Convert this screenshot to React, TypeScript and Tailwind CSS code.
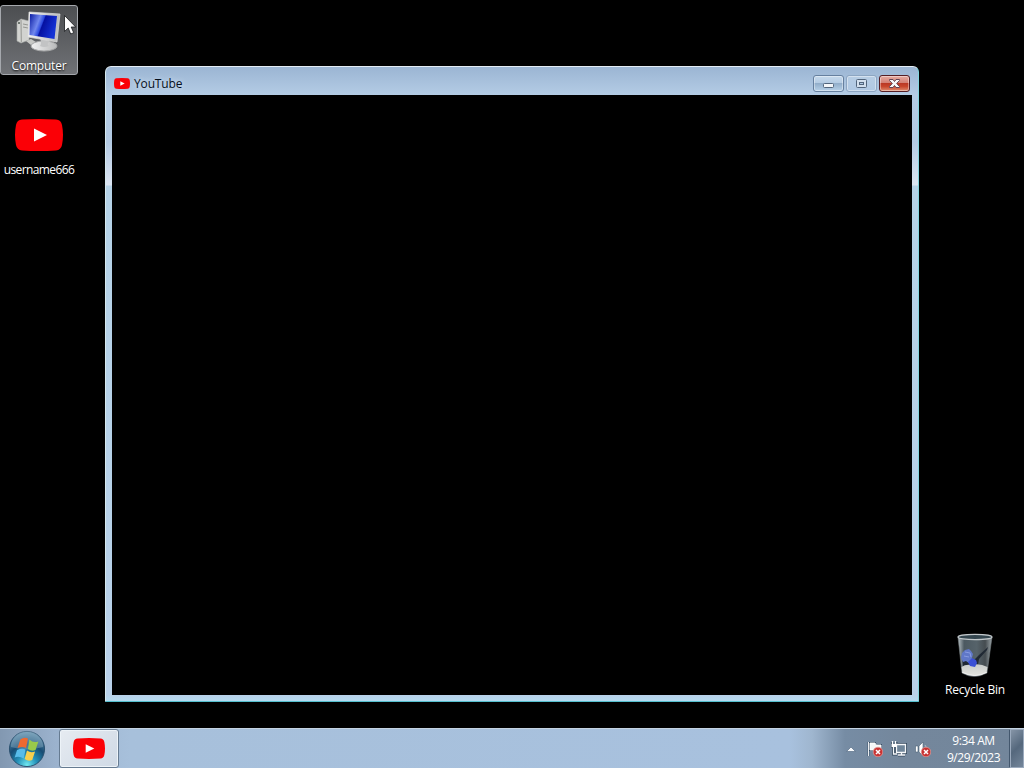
import { ReactNode } from "react";
import { clsx } from "clsx";

export default function App() {
  return (
    <div className="flex h-screen w-screen flex-col overflow-hidden bg-black font-['Open_Sans','Noto_Sans',sans-serif] text-[12px] select-none">
      <main className="relative flex-1">
        <DesktopIcon label="Computer" className="left-0 top-[5px] tracking-[-0.2px]" selected>
          <ComputerIcon />
        </DesktopIcon>
        <DesktopIcon label="username666" className="left-0 top-[109px] tracking-[-0.6px]">
          <YouTubeIcon className="mt-[9px] h-8 w-12" />
        </DesktopIcon>
        <DesktopIcon label="Recycle Bin" className="left-[936px] top-[629px] tracking-[-0.25px]">
          <RecycleBinIcon />
        </DesktopIcon>
        <Window />
        <Cursor />
      </main>
      <Taskbar />
    </div>
  );
}

function DesktopIcon({ label, className, selected, children }: {
  label: string;
  className: string;
  selected?: boolean;
  children: ReactNode;
}) {
  return (
    <div
      className={clsx(
        "absolute flex h-[70px] w-[78px] flex-col items-center justify-between rounded-[3px] border",
        selected
          ? "border-[#a5a8ad] bg-linear-to-b from-[#4c4e51] to-[#707276]"
          : "border-transparent",
        className
      )}
    >
      {children}
      <span className="whitespace-nowrap text-[12px] leading-[17px] text-white [text-shadow:0_1px_2px_#000]">
        {label}
      </span>
    </div>
  );
}

function Window() {
  return (
    <section className="absolute left-[105px] top-[66px] flex h-[636px] w-[814px] flex-col rounded-t-[6px] rounded-b-[1px] border border-t-[#e4edf5] border-l-[#d5e8ee] border-r-[#83d5df] border-b-[#55bfce] bg-[linear-gradient(to_bottom,#9bb5d3_0px,#b4cce5_28px,#b3cae3_75px,#dce5f2_118px,#b5d2e7_119px,#b9d1ea_628px,#b5daf0_100%)] px-[6px] pb-[6px]">
      <header className="flex h-7 shrink-0 items-center pl-[2px] pt-[5px]">
        <YouTubeIcon className="h-[11px] w-4" />
        <h1 className="ml-1 text-[12px] leading-4 tracking-[-0.15px] text-[#06101c] [text-shadow:0_0_5px_#dce9f5]">YouTube</h1>
        <div className="ml-auto mr-[2px] flex gap-[2px]">
          <CaptionButton className="border-[#66809f] bg-[linear-gradient(#c5d9ec_0%,#b4cbe3_48%,#92aeca_50%,#b7d1e9_100%)]">
            <rect x="9.5" y="7.5" width="10" height="4" rx="1" fill="#f4f7fa" stroke="#53667d" />
          </CaptionButton>
          <CaptionButton className="border-[#8da6c2] bg-linear-to-b from-[#b7cde4] to-[#b0c9e4]">
            <rect x="9.5" y="3.5" width="10" height="8" rx="1" fill="#d2dfed" stroke="#52657c" />
            <rect x="12.5" y="6.5" width="4" height="2" fill="#afc7e1" stroke="#52657c" />
          </CaptionButton>
          <CaptionButton className="border-[#541d24] bg-[linear-gradient(#e6aaa1_0%,#d38074_47%,#bb3925_50%,#c8472d_70%,#df8d70_100%)]">
            <path d="M9.500 3.500h3.500l1.500 2L16 3.500h3.500v1l-2.800 3 2.800 3v1H16l-1.500-2-1.500 2H9.500v-1l2.800-3-2.800-3z" fill="#f7f7f8" stroke="#624454" />
          </CaptionButton>
        </div>
      </header>
      <div className="flex-1 bg-black" />
    </section>
  );
}

function CaptionButton({ className, children }: { className: string; children: ReactNode }) {
  return (
    <button className={clsx("h-[17px] w-[31px] rounded-[3px] border shadow-[inset_0_0_0_1px_#ffffff66]", className)}>
      <svg viewBox="0 0 29 15" className="block h-[15px] w-[29px]">{children}</svg>
    </button>
  );
}

function Taskbar() {
  return (
    <footer className="flex h-10 shrink-0 border-t border-[#c4d3e2] bg-[linear-gradient(to_right,#8298b1_0px,#9bb2cd_55px,#a7c0db_130px,#a8c1de_790px,#9fb6cf_812px,#768ca4_845px,#74879c_900px,#73869b_100%)]">
      <button className="flex w-[59px] items-center pl-[7px]">
        <StartOrb />
      </button>
      <button className="flex h-[39px] w-[60px] items-center justify-center rounded-[3px] border border-[#667b91] bg-[linear-gradient(135deg,#e6ebf1,#cfd9e5)] shadow-[inset_0_0_0_1px_#edf3f8]">
        <YouTubeIcon className="h-[21px] w-8" />
      </button>
      <div className="ml-auto flex items-center">
        <svg viewBox="0 0 10 6" className="mr-[11px] h-[6px] w-[10px]">
          <path d="M.5 5.500 5 1l4.500 4.500z" fill="#f8fafc" stroke="#596f86" strokeWidth=".7" />
        </svg>
        <div className="mr-[15px] flex gap-2 pt-px">
          <FlagIcon />
          <NetworkIcon />
          <VolumeIcon />
        </div>
        <div className="w-[55px] whitespace-nowrap text-center text-[12px] leading-[17px] tracking-[-0.4px] text-white">
          <p>9:34 AM</p>
          <p>9/29/2023</p>
        </div>
        <div className="ml-[8px] h-[39px] w-[15px] border border-[#9baabd] border-l-[#43576d] bg-[linear-gradient(135deg,#8796a8,#55687d_50%,#74869a)] shadow-[inset_1px_0_#9baabd]" />
      </div>
    </footer>
  );
}

function YouTubeIcon({ className }: { className: string }) {
  return (
    <svg viewBox="0 0 48 32" preserveAspectRatio="none" className={className}>
      <path d="M7 .6Q24-.6 41 .6q5 .4 6 5.400 2 10 0 20-1 5-6 5.400-17 1.200-34 0-5-.4-6-5.400-2-10 0-20 1-5 6-5.400z" fill="#fb0006" />
      <path d="m19 9.500 13 6.500-13 6.500z" fill="#fff" />
    </svg>
  );
}

function ComputerIcon() {
  return (
    <svg viewBox="0 0 48 48" className="h-12 w-12">
      <defs>
        <linearGradient id="screen" x1="0" y1="0" x2="1" y2=".35">
          <stop stopColor="#0718a0" />
          <stop offset=".38" stopColor="#7188ee" />
          <stop offset=".52" stopColor="#2b49df" />
          <stop offset=".56" stopColor="#0510a0" />
          <stop offset="1" stopColor="#1532d5" />
        </linearGradient>
        <linearGradient id="metal">
          <stop stopColor="#f2f2f2" />
          <stop offset="1" stopColor="#b8b9ba" />
        </linearGradient>
      </defs>
      <path d="m2 16 4-3 8 2v19l-8 3-4-2z" fill="#d2d3d0" stroke="#a5a7a4" strokeWidth=".6" />
      <path d="m6 14 .3 22M8 18l5 1M8 21l5 1" stroke="#858782" strokeWidth=".8" />
      <circle cx="4" cy="17" r="1" fill="#4d5750" />
      <path d="m11 35 5-2 5 3-5 3z" fill="#c7c8c5" />
      <ellipse cx="29" cy="40" rx="13" ry="5" fill="url(#metal)" stroke="#a6a7a8" />
      <path d="m25 32 10 3q-4 3-1 5-5 2-9 0 2-3 0-8z" fill="#c2c3c4" />
      <path d="m14 6 31 2-3 28-29-5z" fill="url(#metal)" stroke="#dcdddd" strokeWidth=".7" />
      <path d="m15 8 27 2-2.500 23-25-4z" fill="url(#screen)" />
    </svg>
  );
}

function RecycleBinIcon() {
  return (
    <svg viewBox="0 0 48 48" className="h-12 w-12">
      <defs>
        <linearGradient id="glass">
          <stop stopColor="#b8c1c5" />
          <stop offset=".18" stopColor="#4c5961" />
          <stop offset=".55" stopColor="#56636a" />
          <stop offset=".8" stopColor="#454c50" />
          <stop offset="1" stopColor="#9ba4a8" />
        </linearGradient>
        <linearGradient id="base" x1="0" y1="0" x2="0" y2="1">
          <stop stopColor="#c9ccca" />
          <stop offset="1" stopColor="#e3e3de" />
        </linearGradient>
      </defs>
      <path d="m7 7 4 36q12 7 25 0l5-36z" fill="url(#glass)" stroke="#747c80" strokeWidth=".6" />
      <path d="m11 27 12 3 5-5 9-8-1 3-8 9-1 6-15 2z" fill="#202934" />
      <path d="M10.500 37q4-3 10-2 8-2 16 2l-1 6q-12 6-24 0z" fill="url(#base)" />
      <path d="m11 23 3-3 4-1 2 2 2 3-1 4 2 4-4 2-4-3-3 1-2-4z" fill="#6078c8" />
      <path d="m14 22 5 1 1 4M13 26l5 1" fill="none" stroke="#879be0" strokeWidth="1" />
      <path d="m17 32 4-4 4 2 1 3-2 4-5-1z" fill="#3a50d5" />
      <ellipse cx="24" cy="7" rx="17" ry="2.700" fill="#34464f" stroke="#c3c9cc" strokeWidth="1.200" />
      <path d="M11 42q13 7 25 0" stroke="#eee" fill="none" />
    </svg>
  );
}

function StartOrb() {
  return (
    <svg viewBox="0 0 40 40" className="h-[38px] w-[40px]">
      <defs>
        <radialGradient id="orb" cx=".5" cy=".95" r=".95">
          <stop stopColor="#70e8f0" />
          <stop offset=".3" stopColor="#2490b8" />
          <stop offset=".6" stopColor="#174c73" />
          <stop offset="1" stopColor="#6796b2" />
        </radialGradient>
      </defs>
      <circle cx="20" cy="20" r="18.500" fill="url(#orb)" stroke="#294f6e" />
      <path d="M3 18a17 17 0 0 1 34 0q-17 5-34 0" fill="#bad1dd" opacity=".3" />
      <path d="M13 10q4-3 8-1l-2 10q-4-2-9 0z" fill="#ee6930" />
      <path d="M22.500 10q4 4 9.500 2l-3 9q-4 2-8-1z" fill="#99c94b" />
      <path d="M9.500 21q5-2 9-.5l-2 9.500q-5-3-9.500-1z" fill="#58bce9" />
      <path d="M20 21.500q4 3 8.500 1l-3 9q-4 2-8-1z" fill="#f8cf4d" />
    </svg>
  );
}

function ErrorBadge() {
  return (
    <g>
      <circle cx="11" cy="11" r="4.800" fill="#c93333" stroke="#e5a19c" strokeWidth=".7" />
      <path d="m9 9 4 4m0-4-4 4" stroke="#fff" strokeWidth="1.500" />
    </g>
  );
}

function FlagIcon() {
  return (
    <svg viewBox="0 0 16 16" className="size-4">
      <path d="M1.500 1v14M3 2h5l1 2h5v7H8L7 9H3z" fill="#edf2f5" stroke="#33495f" strokeWidth="1.800" />
      <path d="M1.500 1v14M3 2h5l1 2h5v7H8L7 9H3z" fill="#f5f7f8" stroke="#fff" strokeWidth=".9" />
      <ErrorBadge />
    </svg>
  );
}

function NetworkIcon() {
  return (
    <svg viewBox="0 0 16 16" className="size-4">
      <path d="M5.500 3.500h9v8h-9zM7 14h7m-3.500-2v2M1 1v4h4V1M2.500 5v8H6" fill="none" stroke="#34495d" strokeWidth="3" />
      <path d="M5.500 3.500h9v8h-9z" fill="#70869a" stroke="#f6f8fa" strokeWidth="1.300" />
      <path d="M7 14h7m-3.500-2v2M2.500 5v8H6" fill="none" stroke="#f6f8fa" strokeWidth="1.300" />
      <path d="M.5 3h5v3h-5z" fill="#fff" />
      <path d="M1.500 0v3m3-3v3" stroke="#fff" strokeWidth="1.300" />
    </svg>
  );
}

function VolumeIcon() {
  return (
    <svg viewBox="0 0 16 16" className="size-4">
      <path d="M.5 5H3v6H.5zM4 5l4-4v14l-4-4z" fill="#fff" stroke="#4c6175" strokeWidth=".6" />
      <path d="M10 4q3 3 1 7" fill="none" stroke="#aabac7" />
      <ErrorBadge />
    </svg>
  );
}

function Cursor() {
  return (
    <svg viewBox="0 0 12 20" className="absolute left-[64px] top-[15px] h-5 w-3">
      <path d="M.5.5v16l3.700-3.500 2.500 6 3-1.300-2.500-5.700h4.500z" fill="#fff" stroke="#17191c" strokeWidth=".8" />
    </svg>
  );
}
